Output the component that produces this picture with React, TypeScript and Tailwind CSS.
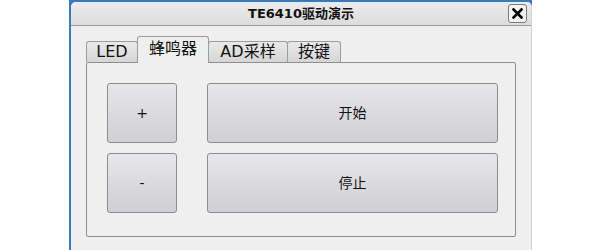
import React from "react";

const font = "font-['DejaVu_Sans','Noto_Sans_CJK_SC',sans-serif]";

const Tab = ({ label, w, active }: { label: string; w: string; active?: boolean }) =>
  active ? (
    <div className={`relative z-10 -mb-px -ml-px h-[27px] pb-[2px] flex items-center justify-center border border-b-0 border-[#9c9c9c] rounded-t-[3px] bg-[#efefef] text-[16px] text-[#111] ${w}`}>
      {label}
    </div>
  ) : (
    <div className={`h-[21px] flex items-center justify-center border border-b-0 border-[#9c9c9c] rounded-t-[3px] bg-gradient-to-b from-[#e9e9e9] to-[#d6d6d6] text-[16px] text-[#111] -ml-px first:ml-0 ${w}`}>
      {label}
    </div>
  );

const Btn = ({ label, wide }: { label: string; wide?: boolean }) => (
  <button
    className={
      "h-[60px] rounded-[3px] border border-[#8c8c8c] bg-gradient-to-b from-[#e7e7ea] to-[#cfcfd4] text-[14px] text-[#111] flex items-center justify-center " +
      (wide ? "w-[291px]" : "w-[70px]")
    }
  >
    {label}
  </button>
);

export default function App() {
  return (
    <div className={`w-[600px] h-[250px] bg-white flex ${font}`}>
      <div className="w-[69px]" />
      <div className="w-[2px] bg-[#3a78c0]" />
      <div className="w-[461px] h-[250px] bg-[linear-gradient(to_bottom,#3a78c0_0,#3a78c0_6px,white_6px)] flex flex-col">
        <div className="mt-[2px] flex-1 flex flex-col rounded-t-[5px] bg-[#efefef] border-r border-[#d2d2d2] overflow-hidden">
          <div className="h-[24px] shrink-0 flex items-center justify-center relative bg-gradient-to-b from-[#ececec] to-[#dcdcdc] border-b border-[#9a9a9a]">
            <span className="text-[13px] font-bold text-[#111]">TE6410驱动演示</span>
            <div className="absolute right-[4px] top-[2px] w-[19px] h-[19px] rounded-[3px] border border-[#7a7a7a] bg-[#f2f2f2] flex items-center justify-center">
              <svg width="11" height="11" viewBox="0 0 11 11">
                <path d="M1.5 1.5 L9.5 9.5 M9.5 1.5 L1.5 9.5" stroke="#000" strokeWidth="2.6" strokeLinecap="square" />
              </svg>
            </div>
          </div>
          <div className="pl-[15px] pt-[10px]">
            <div className="flex items-end">
              <Tab label="LED" w="w-[52px]" />
              <Tab label="蜂鸣器" w="w-[72px]" active />
              <Tab label="AD采样" w="w-[80px]" />
              <Tab label="按键" w="w-[54px]" />
            </div>
            <div className="w-[430px] h-[175px] border border-[#8e8e8e] rounded-[2px] bg-[#efefef] pl-[20px] pt-[20px]">
              <div className="flex flex-col gap-[10px]">
                <div className="flex gap-[30px]">
                  <Btn label="+" />
                  <Btn label="开始" wide />
                </div>
                <div className="flex gap-[30px]">
                  <Btn label="-" />
                  <Btn label="停止" wide />
                </div>
              </div>
            </div>
          </div>
        </div>
      </div>
    </div>
  );
}
